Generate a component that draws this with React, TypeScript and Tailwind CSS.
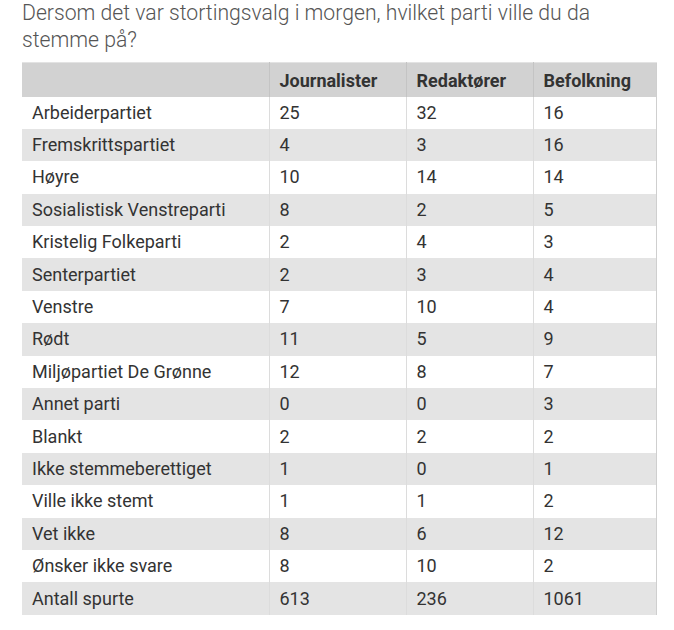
const rows: [string, string, string, string][] = [
  ["Arbeiderpartiet", "25", "32", "16"],
  ["Fremskrittspartiet", "4", "3", "16"],
  ["Høyre", "10", "14", "14"],
  ["Sosialistisk Venstreparti", "8", "2", "5"],
  ["Kristelig Folkeparti", "2", "4", "3"],
  ["Senterpartiet", "2", "3", "4"],
  ["Venstre", "7", "10", "4"],
  ["Rødt", "11", "5", "9"],
  ["Miljøpartiet De Grønne", "12", "8", "7"],
  ["Annet parti", "0", "0", "3"],
  ["Blankt", "2", "2", "2"],
  ["Ikke stemmeberettiget", "1", "0", "1"],
  ["Ville ikke stemt", "1", "1", "2"],
  ["Vet ikke", "8", "6", "12"],
  ["Ønsker ikke svare", "8", "10", "2"],
  ["Antall spurte", "613", "236", "1061"],
];

export default function App() {
  return (
    <div className="min-h-screen bg-white pl-[22px] font-['Roboto',sans-serif]">
      <h2 className="-mt-[1px] w-[634px] text-[21.2px] font-light leading-[27px] text-[#555]">
        Dersom det var stortingsvalg i morgen, hvilket parti ville du da stemme på?
      </h2>
      <table className="mt-[9px] w-[634px] table-fixed border-collapse border-r border-[#cfcfcf] text-[18px] text-[#333]">
        <colgroup>
          <col className="w-[247px]" />
          <col className="w-[137px]" />
          <col className="w-[127px]" />
          <col className="w-[123px]" />
        </colgroup>
        <thead>
          <tr className="h-[34px] bg-[#d2d2d2] border-t border-[#e3e3e3]">
            <th className="px-[10px]" />
            <th className="border-l border-[#c4c4c4] px-[10px] pt-[1px] text-left font-bold">Journalister</th>
            <th className="border-l border-[#c4c4c4] px-[10px] pt-[1px] text-left font-bold">Redaktører</th>
            <th className="border-l border-[#c4c4c4] px-[10px] pt-[1px] text-left font-bold">Befolkning</th>
          </tr>
        </thead>
        <tbody>
          {rows.map((r, i) => (
            <tr key={r[0]} className={i % 2 === 0 ? "h-[32.4px] bg-white" : "h-[32.4px] bg-[#e4e4e4]"}>
              <td className="px-[10px] leading-[22px]">{r[0]}</td>
              <td className="border-l border-[#dcdcdc] px-[10px] leading-[22px]">{r[1]}</td>
              <td className="border-l border-[#dcdcdc] px-[10px] leading-[22px]">{r[2]}</td>
              <td className="border-l border-[#dcdcdc] px-[10px] leading-[22px]">{r[3]}</td>
            </tr>
          ))}
        </tbody>
      </table>
    </div>
  );
}
